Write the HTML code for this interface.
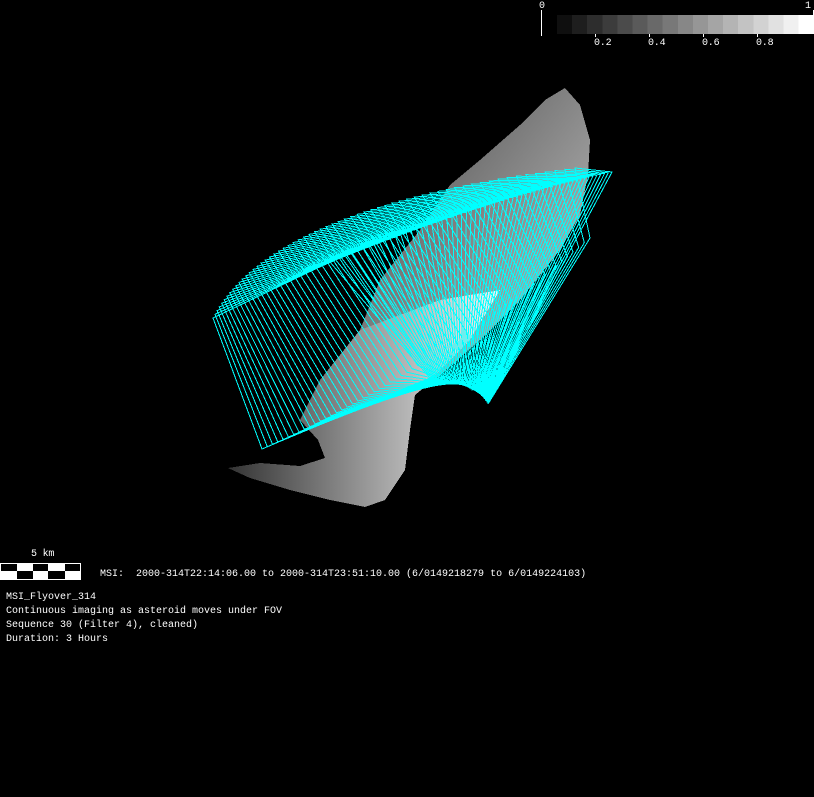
<!DOCTYPE html>
<html><head><meta charset="utf-8"><style>
html,body{margin:0;padding:0;background:#000;width:814px;height:797px;overflow:hidden}
.t{position:absolute;font-family:"Liberation Mono",monospace;font-size:10px;color:#fff;white-space:pre;line-height:14px;letter-spacing:-0.2px}
</style></head><body>
<svg id="s" width="814" height="797" style="position:absolute;left:0;top:0" shape-rendering="crispEdges">
<defs>
<linearGradient id="g1" x1="0" y1="0" x2="1" y2="1">
<stop offset="0" stop-color="#444"/><stop offset="0.5" stop-color="#888"/><stop offset="1" stop-color="#ccc"/></linearGradient>
<linearGradient id="g3" x1="0" y1="0" x2="1" y2="0">
<stop offset="0" stop-color="#333"/><stop offset="0.6" stop-color="#aaa"/><stop offset="1" stop-color="#f4f4f4"/></linearGradient>
</defs>
<polygon fill="url(#g1)" points="565,88 580,105 590,140 588,175 580,215 560,250 520,300 480,340 440,375 415,395 390,380 360,330 380,280 420,230 450,185 480,160 520,125 545,100"/>
<polygon fill="url(#g3)" points="360,330 440,300 500,290 470,340 430,380 415,395 410,430 405,470 385,500 365,507 330,500 290,490 250,478 228,468 260,463 300,466 325,458 318,440 300,420 320,380"/>
<g id="m" fill="none" stroke="#00ffff" stroke-width="1"></g>
<g id="cb"></g>
<line x1="541.5" y1="10" x2="541.5" y2="36" stroke="#fff"/>
<line x1="813.5" y1="10" x2="813.5" y2="15" stroke="#fff"/>
<rect x="0" y="563" width="81" height="17" fill="#fff"/>
<rect x="1" y="564" width="16" height="7" fill="#000"/>
<rect x="33" y="564" width="15" height="7" fill="#000"/>
<rect x="65" y="564" width="15" height="7" fill="#000"/>
<rect x="17" y="571" width="16" height="8" fill="#000"/>
<rect x="48" y="571" width="17" height="8" fill="#000"/>
</svg>
<div class="t" style="left:539px;top:0px">0</div>
<div class="t" style="left:805px;top:0px">1</div>
<div class="t" style="left:594px;top:37px">0.2</div>
<div class="t" style="left:648px;top:37px">0.4</div>
<div class="t" style="left:702px;top:37px">0.6</div>
<div class="t" style="left:756px;top:37px">0.8</div>
<div class="t" style="left:31px;top:548px">5 km</div>
<div class="t" style="left:100px;top:568px;letter-spacing:0">MSI:  2000-314T22:14:06.00 to 2000-314T23:51:10.00 (6/0149218279 to 6/0149224103)</div>
<div class="t" style="left:6px;top:591px;letter-spacing:0">MSI_Flyover_314
Continuous imaging as asteroid moves under FOV
Sequence 30 (Filter 4), cleaned)
Duration: 3 Hours</div>
<script>
var ns="http://www.w3.org/2000/svg";
var cb=document.getElementById("cb");
for(var i=0;i<17;i++){var r=document.createElementNS(ns,"rect");r.setAttribute("x",557+i*15.1);r.setAttribute("y",15);r.setAttribute("width",15.5);r.setAttribute("height",19);var v=Math.round(15+i*240/16);r.setAttribute("fill","rgb("+v+","+v+","+v+")");cb.appendChild(r);}
[595,649,703,757].forEach(function(x){var l=document.createElementNS(ns,"line");l.setAttribute("x1",x+.5);l.setAttribute("x2",x+.5);l.setAttribute("y1",34);l.setAttribute("y2",37);l.setAttribute("stroke","#fff");cb.appendChild(l);});
function bz(a,b,c,t){var u=1-t;return[u*u*a[0]+2*u*t*b[0]+t*t*c[0],u*u*a[1]+2*u*t*b[1]+t*t*c[1]];}
var m=document.getElementById("m");
var N=60;
for(var i=0;i<=N;i++){var t=i/N;
var A=bz([213,318],[270,205],[575,168],t);
var B=bz([330,262],[500,195],[612,172],t);
var C=bz([430,378],[475,382],[488,404],t);
var D=bz([262,449],[420,380],[590,238],t);
var p=document.createElementNS(ns,"polygon");
p.setAttribute("points",[A,B,C,D].map(function(q){return q[0].toFixed(1)+","+q[1].toFixed(1)}).join(" "));
m.appendChild(p);}
</script>
</body></html>
